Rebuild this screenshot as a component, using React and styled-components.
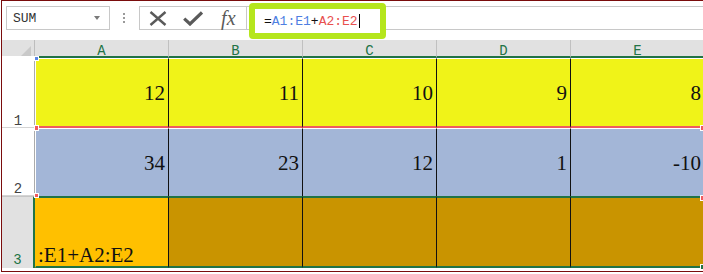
import React from "react";
import styled, { createGlobalStyle } from "styled-components";

const GlobalStyle = createGlobalStyle`
  html, body {
    margin: 0;
    padding: 0;
    background: #fff;
  }
  body {
    font-family: "Liberation Sans", Arial, sans-serif;
  }
`;

const GREEN = "#217346";
const columns = ["A", "B", "C", "D", "E"];

const rows = [
  {
    id: 1,
    values: ["12", "11", "10", "9", "8"],
    fill: "#f0f318",
    top: "1px solid #fff",
    bottom: "2px solid #f05a5e",
  },
  {
    id: 2,
    values: ["34", "23", "12", "1", "-10"],
    fill: "#a3b6d7",
    top: "1px solid #fff",
    bottom: "none",
  },
  {
    id: 3,
    values: [":E1+A2:E2", "", "", "", ""],
    fill: "#c99400",
    first: "#ffc000",
    top: `2px solid ${GREEN}`,
    bottom: `2px solid ${GREEN}`,
    active: true,
  },
];

const handles = [
  { x: 33, y: 17, w: 3, h: 3, c: "#5b86e5" },
  { x: 33, y: 86, w: 3, h: 4, c: "#f05a5e" },
  { x: 33, y: 154, w: 3, h: 3, c: "#f05a5e" },
  { x: 699, y: 86, w: 3, h: 4, c: "#f05a5e" },
  { x: 699, y: 156, w: 3, h: 4, c: "#f05a5e" },
  { x: 699, y: 225, w: 3, h: 4, c: GREEN },
];

function App() {
  return (
    <>
      <GlobalStyle />
      <Frame>
        <Toolbar>
          <NameBox>
            <NameText>SUM</NameText>
            <DropArrow />
          </NameBox>
          <Grip>
            <Dot />
            <Dot />
            <Dot />
          </Grip>
          <ButtonGroup>
            <ToolButton>
              <svg width="18" height="15" viewBox="0 0 18 15">
                <path
                  d="M1.5 1 L16.5 14 M16.5 1 L1.5 14"
                  stroke="#5a5a5a"
                  strokeWidth="2.4"
                  fill="none"
                />
              </svg>
            </ToolButton>
            <ToolButton>
              <svg width="20" height="15" viewBox="0 0 20 15">
                <path
                  d="M1.2 7.6 L7 13 L19 1.5"
                  stroke="#5a5a5a"
                  strokeWidth="3.2"
                  fill="none"
                />
              </svg>
            </ToolButton>
            <ToolButton>
              <Fx>fx</Fx>
            </ToolButton>
          </ButtonGroup>
          <FormulaBox>
            <Highlight>
              <FormulaText>
                =<RefBlue>A1:E1</RefBlue>+<RefRed>A2:E2</RefRed>
              </FormulaText>
              <Caret />
            </Highlight>
          </FormulaBox>
        </Toolbar>

        <Sheet>
          <Corner>
            <CornerMark />
          </Corner>
          {columns.map((c) => (
            <ColHead key={c}>{c}</ColHead>
          ))}

          {rows.map((row) => (
            <React.Fragment key={row.id}>
              <RowHead $active={row.active}>{row.id}</RowHead>
              {row.values.map((v, i) => (
                <Cell
                  key={i}
                  $fill={i === 0 && row.first ? row.first : row.fill}
                  $top={row.top}
                  $bottom={row.bottom}
                  $first={i === 0}
                  $editing={row.active && i === 0}
                >
                  {v}
                </Cell>
              ))}
            </React.Fragment>
          ))}

          {handles.map((h, i) => (
            <Handle key={i} $x={h.x} $y={h.y} $w={h.w} $h={h.h} $c={h.c} />
          ))}
        </Sheet>
      </Frame>
    </>
  );
}

const Frame = styled.div`
  margin-left: 1px;
  width: 702px;
  height: 272px;
  box-sizing: border-box;
  border-top: 1px solid #7a0c0c;
  border-left: 1px solid #7a0c0c;
  border-bottom: 1px solid #7a0c0c;
  background: #fff;
  overflow: hidden;
`;

const Toolbar = styled.div`
  height: 39px;
  box-sizing: border-box;
  display: flex;
  align-items: flex-start;
  padding: 5px 0 0 4px;
`;

const NameBox = styled.div`
  width: 104px;
  height: 24px;
  box-sizing: border-box;
  border: 1px solid #c8c8c8;
  display: flex;
  align-items: center;
  justify-content: space-between;
  padding: 0 9px 0 6px;
`;

const NameText = styled.span`
  font: 13px/1 "Liberation Mono", monospace;
  color: #333;
`;

const DropArrow = styled.span`
  width: 0;
  height: 0;
  border-left: 3.5px solid transparent;
  border-right: 3.5px solid transparent;
  border-top: 4px solid #7a7a7a;
`;

const Grip = styled.div`
  width: 29px;
  height: 24px;
  box-sizing: border-box;
  padding-right: 2px;
  display: flex;
  flex-direction: column;
  align-items: center;
  justify-content: center;
  gap: 2px;
`;

const Dot = styled.span`
  width: 2px;
  height: 2px;
  background: #9a9a9a;
`;

const ButtonGroup = styled.div`
  width: 108px;
  height: 24px;
  box-sizing: border-box;
  border: 1px solid #c8c8c8;
  display: flex;
`;

const ToolButton = styled.div`
  flex: 1;
  display: flex;
  align-items: center;
  justify-content: center;
`;

const Fx = styled.span`
  font: italic 20px/1 "Liberation Serif", "Times New Roman", serif;
  color: #5a5a5a;
  margin-top: -1px;
`;

const FormulaBox = styled.div`
  position: relative;
  flex: 1;
  height: 24px;
  box-sizing: border-box;
  border-top: 1px solid #c8c8c8;
  border-bottom: 1px solid #c8c8c8;
`;

const Highlight = styled.div`
  position: absolute;
  left: 2px;
  top: -4px;
  width: 137px;
  height: 36px;
  box-sizing: border-box;
  border: 6px solid #b5e61d;
  border-radius: 4px;
  background: #fff;
  display: flex;
  align-items: center;
  padding-left: 9px;
`;

const FormulaText = styled.span`
  font: 13px/1 "Liberation Mono", monospace;
  color: #111;
`;

const RefBlue = styled.span`
  color: #4f7fe2;
`;

const RefRed = styled.span`
  color: #e8504f;
`;

const Caret = styled.span`
  width: 1px;
  height: 14px;
  background: #000;
  margin-left: 1px;
`;

const Sheet = styled.div`
  position: relative;
  display: grid;
  grid-template-columns: 33px repeat(5, 134px);
  grid-template-rows: 18px 70px 68px 72px;
`;

const Corner = styled.div`
  box-sizing: border-box;
  background: #e1e1e1;
  border-right: 1px solid #bdbdbd;
  border-bottom: 2px solid #fff;
  display: flex;
  align-items: flex-end;
  justify-content: flex-end;
  padding: 0 3px 0 0;
`;

const CornerMark = styled.span`
  width: 0;
  height: 0;
  border-left: 10px solid transparent;
  border-bottom: 10px solid #c9c9c9;
`;

const ColHead = styled.div`
  box-sizing: border-box;
  background: #e1e1e1;
  border-right: 1px solid #c0c0c0;
  border-bottom: 2px solid ${GREEN};
  padding-top: 3px;
  text-align: center;
  font: 14px/16px "Liberation Mono", monospace;
  color: ${GREEN};
  overflow: hidden;
`;

const RowHead = styled.div`
  box-sizing: border-box;
  display: flex;
  align-items: flex-end;
  justify-content: center;
  padding-bottom: ${(p) => (p.$active ? "2px" : "0")};
  background: ${(p) => (p.$active ? "#e1e1e1" : "#fff")};
  color: ${(p) => (p.$active ? GREEN : "#444")};
  border-top: ${(p) => (p.$active ? "1px solid #c6c6c6" : "none")};
  border-right: ${(p) => (p.$active ? `2px solid ${GREEN}` : "1px solid #ababab")};
  border-bottom: ${(p) => (p.$active ? "none" : "1px solid #d4d4d4")};
  font: 14px/12px "Liberation Mono", monospace;
`;

const Cell = styled.div`
  box-sizing: border-box;
  display: flex;
  align-items: ${(p) => (p.$editing ? "flex-end" : "center")};
  justify-content: ${(p) => (p.$editing ? "flex-start" : "flex-end")};
  padding: ${(p) => (p.$editing ? "0 0 0 2px" : "2px 3px 0 0")};
  background: ${(p) => p.$fill};
  border-top: ${(p) => p.$top};
  border-bottom: ${(p) => p.$bottom};
  border-left: ${(p) => (p.$first ? "1px solid" : "none")};
  border-left-color: ${(p) => (p.$editing ? p.$fill : "#fff")};
  border-right: 1px solid #111;
  font: 21px/1 "Liberation Serif", "Times New Roman", serif;
  color: #111;
  white-space: nowrap;
`;

const Handle = styled.span`
  position: absolute;
  left: ${(p) => p.$x}px;
  top: ${(p) => p.$y}px;
  width: ${(p) => p.$w}px;
  height: ${(p) => p.$h}px;
  background: ${(p) => p.$c};
  outline: 1px solid #fff;
`;

export default App;
